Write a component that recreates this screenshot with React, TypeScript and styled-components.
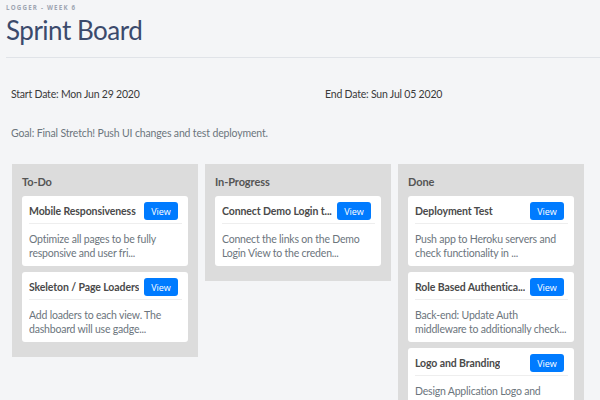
import styled, { createGlobalStyle } from 'styled-components';

const GlobalStyle = createGlobalStyle`
  html, body {
    margin: 0;
    padding: 0;
    background: #f4f5f7;
    font-family: Lato, "Open Sans", sans-serif;
    overflow: hidden;
  }
`;

type Task = { title: string; body: string };
type Lane = { name: string; tasks: Task[] };

const lanes: Lane[] = [
  {
    name: 'To-Do',
    tasks: [
      { title: 'Mobile Responsiveness', body: 'Optimize all pages to be fully responsive and user fri...' },
      { title: 'Skeleton / Page Loaders', body: 'Add loaders to each view. The dashboard will use gadge...' },
    ],
  },
  {
    name: 'In-Progress',
    tasks: [
      { title: 'Connect Demo Login t...', body: 'Connect the links on the Demo Login View to the creden...' },
    ],
  },
  {
    name: 'Done',
    tasks: [
      { title: 'Deployment Test', body: 'Push app to Heroku servers and check functionality in ...' },
      { title: 'Role Based Authentica...', body: 'Back-end: Update Auth middleware to additionally check...' },
      { title: 'Logo and Branding', body: 'Design Application Logo and branding assets.' },
    ],
  },
];

const App = () => {
  return (
    <Page>
      <GlobalStyle />
      <Header>
        <Eyebrow>Logger - Week 6</Eyebrow>
        <Title>Sprint Board</Title>
      </Header>
      <Divider />
      <Dates>
        <DateText>Start Date: Mon Jun 29 2020</DateText>
        <DateText>End Date: Sun Jul 05 2020</DateText>
      </Dates>
      <Goal>Goal: Final Stretch! Push UI changes and test deployment.</Goal>
      <Board>
        {lanes.map((lane) => (
          <Column key={lane.name}>
            <ColumnTitle>{lane.name}</ColumnTitle>
            {lane.tasks.map((task) => (
              <Card key={task.title}>
                <CardHeader>
                  <CardTitle>{task.title}</CardTitle>
                  <ViewButton>View</ViewButton>
                </CardHeader>
                <CardBody>{task.body}</CardBody>
              </Card>
            ))}
          </Column>
        ))}
      </Board>
    </Page>
  );
};

export default App;

const Page = styled.div`
  width: 600px;
  height: 400px;
  overflow: hidden;
`;

const Header = styled.div`
  padding: 3px 6px 0;
`;

const Eyebrow = styled.div`
  font-family: "Open Sans", sans-serif;
  font-size: 6.2px;
  line-height: 10px;
  font-weight: 700;
  letter-spacing: 1.2px;
  text-transform: uppercase;
  color: #9ea5b2;
`;

const Title = styled.h1`
  margin: 0;
  font-size: 26px;
  line-height: 34px;
  font-weight: 400;
  letter-spacing: -0.5px;
  color: #3b4a6c;
`;

const Divider = styled.div`
  margin: 10px 0 0 6px;
  height: 1px;
  background: #e0e3e8;
`;

const Dates = styled.div`
  display: grid;
  grid-template-columns: 314px 1fr;
  padding: 29px 11px 0;
`;

const DateText = styled.div`
  font-size: 10.5px;
  line-height: 14px;
  letter-spacing: -0.2px;
  color: #3a3a3a;
`;

const Goal = styled.div`
  padding: 25px 11px 0;
  font-size: 10.5px;
  line-height: 14px;
  letter-spacing: -0.15px;
  color: #6c757d;
`;

const Board = styled.div`
  display: grid;
  grid-template-columns: repeat(3, 186px);
  column-gap: 7px;
  align-items: start;
  padding: 24px 0 0 12px;
`;

const Column = styled.div`
  background: #dcdcdc;
  padding: 10px 10px 15px;
  display: flex;
  flex-direction: column;
  gap: 6px;
`;

const ColumnTitle = styled.div`
  font-size: 11px;
  line-height: 16px;
  font-weight: 700;
  letter-spacing: -0.1px;
  color: #555;
`;

const Card = styled.div`
  background: #fff;
  border-radius: 3px;
  padding: 6px 6px 6px 7px;
`;

const CardHeader = styled.div`
  display: flex;
  align-items: center;
  justify-content: space-between;
  gap: 3px;
  padding: 0 4px 3px 0;
  border-bottom: 1px solid #eeeeee;
`;

const CardTitle = styled.div`
  font-size: 10.5px;
  line-height: 18px;
  font-weight: 700;
  letter-spacing: -0.1px;
  color: #4a4a4a;
  white-space: nowrap;
  overflow: hidden;
`;

const ViewButton = styled.button`
  flex: none;
  width: 34px;
  height: 18px;
  padding: 0;
  border: none;
  border-radius: 3px;
  background: #007bff;
  color: #fff;
  font-family: "Open Sans", sans-serif;
  font-size: 9px;
`;

const CardBody = styled.div`
  margin-top: 8px;
  max-height: 28px;
  font-size: 10.5px;
  line-height: 14px;
  letter-spacing: -0.2px;
  color: #6c757d;
  display: -webkit-box;
  -webkit-box-orient: vertical;
  -webkit-line-clamp: 2;
  overflow: hidden;
`;
